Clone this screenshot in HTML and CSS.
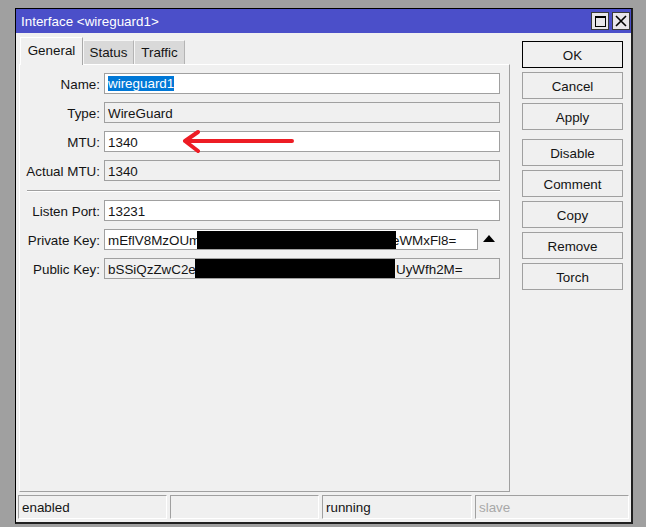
FILE: index.html
```html
<!DOCTYPE html>
<html>
<head>
    <title>Interface &lt;wireguard1&gt;</title>
    <link rel="stylesheet" href="styles.css">
</head>
<body>
<div class="window">
    <div class="titlebar">
        <span class="title">Interface &lt;wireguard1&gt;</span>
        <div class="title-btns">
            <span class="tbtn">
                <svg width="16" height="16" viewBox="0 0 16 16">
                    <rect x="3.5" y="3.5" width="10" height="10" fill="none" stroke="#000" stroke-width="1"/>
                    <line x1="3" y1="4" x2="14" y2="4" stroke="#000" stroke-width="2"/>
                </svg>
            </span>
            <span class="tbtn">
                <svg width="16" height="16" viewBox="0 0 16 16">
                    <path d="M3 3 L13 13 M13 3 L3 13" stroke="#000" stroke-width="1.6" fill="none"/>
                </svg>
            </span>
        </div>
    </div>

    <div class="main">
        <div class="tabs-area">
            <div class="tabs">
                <div class="tab active">General</div>
                <div class="tab">Status</div>
                <div class="tab">Traffic</div>
            </div>
            <div class="panel">
                <div class="form">
                    <label>Name:</label>
                    <div class="field edit"><span class="selected">wireguard1</span></div>

                    <label>Type:</label>
                    <div class="field">WireGuard</div>

                    <label>MTU:</label>
                    <div class="field edit">1340</div>

                    <label>Actual MTU:</label>
                    <div class="field">1340</div>
                </div>

                <div class="sep"></div>

                <div class="form">
                    <label>Listen Port:</label>
                    <div class="field edit">13231</div>

                    <label>Private Key:</label>
                    <div class="field-wrap">
                        <div class="field edit key">
                            mEflV8MzOUm
                            <span class="key-tail priv">eWMxFl8=</span>
                            <span class="redact priv"></span>
                        </div>
                        <span class="toggle">
                            <svg width="12" height="7" viewBox="0 0 12 7"><polygon points="0,7 12,7 6,0" fill="#000"/></svg>
                        </span>
                    </div>

                    <label>Public Key:</label>
                    <div class="field key">
                        bSSiQzZwC2e
                        <span class="key-tail pub">UyWfh2M=</span>
                        <span class="redact pub"></span>
                    </div>
                </div>
            </div>
        </div>

        <div class="buttons">
            <div class="btn default">OK</div>
            <div class="btn">Cancel</div>
            <div class="btn group-end">Apply</div>
            <div class="btn">Disable</div>
            <div class="btn">Comment</div>
            <div class="btn">Copy</div>
            <div class="btn">Remove</div>
            <div class="btn">Torch</div>
        </div>
    </div>

    <div class="statusbar">
        <div class="cell c1">enabled</div>
        <div class="cell c2"></div>
        <div class="cell c3">running</div>
        <div class="cell c4 dim">slave</div>
    </div>
</div>

<!-- red arrow drawn on top of the screenshot -->
<svg class="arrow" width="646" height="527" viewBox="0 0 646 527">
    <path d="M292 141 L186 141 M198 132 L185 141 L198 151" stroke="#ed1c24" stroke-width="4" stroke-linecap="round" stroke-linejoin="round" fill="none"/>
</svg>
</body>
</html>
```

FILE: styles.css
```css
html, body {
    margin: 0;
    padding: 0;
}
body {
    background-color: #a0a0a0;
    font-family: "Liberation Sans", Arial, sans-serif;
    font-size: 13.4px;
    color: #141414;
    position: relative;
    width: 646px;
    height: 527px;
    overflow: hidden;
}
.window {
    width: 618px;
    height: 516px;
    margin: 8px 0 0 15px;
    box-sizing: border-box;
    border: 1px solid #000;
    border-right: 2px solid #202020;
    border-bottom: 2px solid #202020;
    background-color: #f0f0f0;
}
.titlebar {
    height: 24px;
    background-color: #4b4fc9;
    color: #fff;
    display: flex;
    align-items: center;
    justify-content: space-between;
    padding: 0 1px 0 5px;
}
.title-btns {
    display: flex;
    gap: 3px;
}
.tbtn {
    width: 18px;
    height: 18px;
    box-sizing: border-box;
    border: 1px solid #3a3a3a;
    background-color: #e8e6ea;
    display: flex;
    align-items: center;
    justify-content: center;
}
.main {
    display: flex;
    height: 459px;
    padding: 4px 0 0 3px;
    box-sizing: border-box;
}
.tabs-area {
    width: 491px;
}
.tabs {
    display: flex;
    align-items: flex-end;
    height: 27px;
    padding-left: 1px;
}
.tab {
    height: 24px;
    box-sizing: border-box;
    width: 51px;
    line-height: 24px;
    text-align: center;
    background-color: #d9d9d9;
    border-top: 1px solid #f6f6f6;
    border-left: 1px solid #f6f6f6;
    border-right: 1px solid #b4b4b4;
}
.tab.active {
    width: 63px;
    height: 28px;
    line-height: 26px;
    margin-bottom: -1px;
    background-color: #f0f0f0;
    border-top: 1px solid #fff;
    border-left: 1px solid #fff;
    border-right: 1px solid #a8a8a8;
    position: relative;
    z-index: 1;
}
.panel {
    height: 428px;
    box-sizing: border-box;
    border-top: 1px solid #fff;
    border-left: 1px solid #fff;
    border-right: 1px solid #a0a0a0;
    border-bottom: 1px solid #a0a0a0;
    padding: 8px 9px 0 0;
}
.form {
    display: grid;
    grid-template-columns: 80px 1fr;
    grid-auto-rows: 21px;
    column-gap: 4px;
    row-gap: 8px;
}
.form label {
    text-align: right;
    line-height: 23px;
    white-space: nowrap;
}
.field {
    height: 21px;
    box-sizing: border-box;
    border: 1px solid #a0a0a0;
    padding-left: 3px;
    line-height: 21px;
    background-color: #f0f0f0;
    white-space: nowrap;
    overflow: hidden;
}
.field.edit {
    background-color: #fff;
}
.selected {
    background-color: #0078d7;
    color: #fff;
    display: inline-block;
    line-height: 15px;
    vertical-align: top;
    margin-top: 2px;
}
.sep {
    margin: 9px 0 8px 7px;
    border-top: 1px solid #a0a0a0;
    border-bottom: 1px solid #fff;
    height: 0;
}
.field-wrap {
    display: flex;
}
.field-wrap .field {
    flex: 1;
}
.toggle {
    width: 22px;
    display: flex;
    align-items: center;
    justify-content: center;
    padding-bottom: 2px;
}
.key {
    position: relative;
}
.key-tail {
    position: absolute;
    top: 0;
}
.key-tail.priv {
    left: 287px;
}
.key-tail.pub {
    left: 291px;
}
.redact {
    position: absolute;
    background-color: #000;
}
.redact.priv {
    left: 92px;
    width: 199px;
    top: 1px;
    bottom: 0;
}
.redact.pub {
    left: 90px;
    width: 200px;
    top: 0;
    bottom: 0;
}
.buttons {
    width: 101px;
    margin-left: 12px;
    padding-top: 4px;
}
.btn {
    height: 27px;
    box-sizing: border-box;
    border: 1px solid #a0a0a0;
    background-color: #f0f0f0;
    text-align: center;
    line-height: 27px;
    margin-bottom: 4px;
}
.btn.default {
    border-color: #000;
}
.btn.group-end {
    margin-bottom: 9px;
}
.statusbar {
    display: flex;
    gap: 3px;
    margin-top: 3px;
    padding: 0 2px;
}
.cell {
    height: 24px;
    box-sizing: border-box;
    border-top: 1px solid #a0a0a0;
    border-left: 1px solid #a0a0a0;
    border-right: 1px solid #fff;
    border-bottom: 1px solid #fff;
    padding-left: 3px;
    line-height: 23px;
}
.c1 { width: 149px; }
.c2 { width: 149px; }
.c3 { width: 150px; }
.c4 { width: 154px; }
.dim {
    color: #a8a8a8;
}
.arrow {
    position: absolute;
    left: 0;
    top: 0;
    pointer-events: none;
}
```
